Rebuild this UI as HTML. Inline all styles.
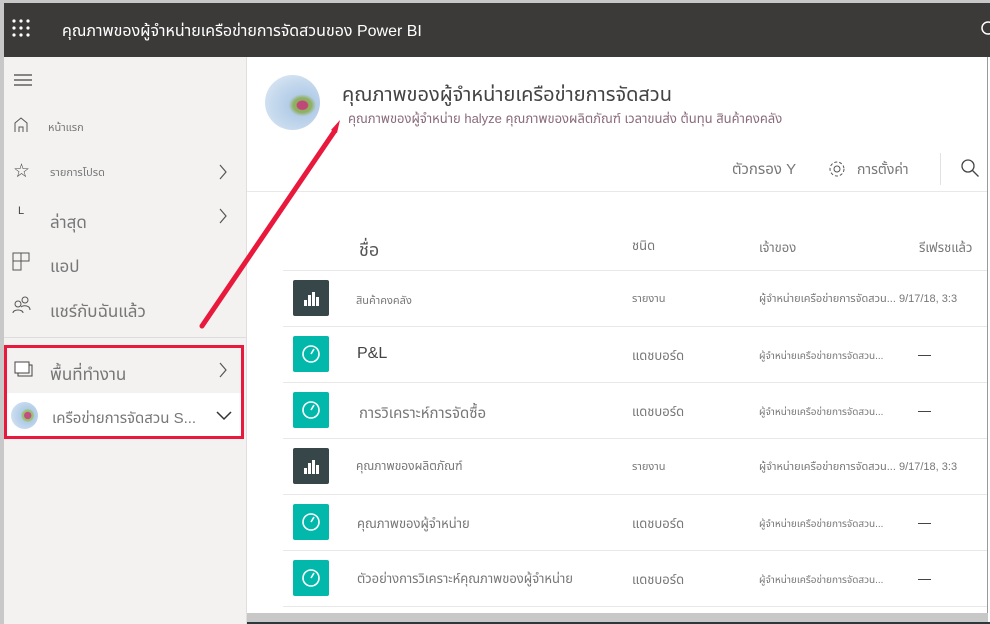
<!DOCTYPE html>
<html><head><meta charset="utf-8"><style>
*{margin:0;padding:0;box-sizing:border-box}
body{width:990px;height:624px;overflow:hidden;position:relative;background:#fff;font-family:"Liberation Sans","Noto Sans Thai","Garuda",sans-serif;color:#555}
.a{position:absolute}
.top{left:0;top:0;width:990px;height:57px;background:#3b3a39;border-top:3px solid #c8c8c8;border-left:4px solid #c8c8c8}
.side{left:0;top:57px;width:247px;height:567px;background:#f3f2f1;border-left:4px solid #c8c8c8;border-right:1px solid #e1dfdd}
.t{white-space:nowrap}
.line{height:1px;background:#e8e8e8}
.ic{width:36px;height:36px;border-radius:2px}
</style></head><body>
<div class="a top"></div>
<svg class="a" style="left:12px;top:19px" width="20" height="20"><g fill="#fff"><circle cx="2" cy="2" r="1.6"/><circle cx="9" cy="2" r="1.6"/><circle cx="16" cy="2" r="1.6"/><circle cx="2" cy="9" r="1.6"/><circle cx="9" cy="9" r="1.6"/><circle cx="16" cy="9" r="1.6"/><circle cx="2" cy="16" r="1.6"/><circle cx="9" cy="16" r="1.6"/><circle cx="16" cy="16" r="1.6"/></g></svg>
<div class="a t" style="left:62px;top:20px;color:#fff;font-size:16px">คุณภาพของผู้จำหน่ายเครือข่ายการจัดสวนของ Power BI</div>
<svg class="a" style="left:978px;top:20px" width="12" height="20"><circle cx="10" cy="8" r="6" fill="none" stroke="#fff" stroke-width="1.5"/></svg>
<div class="a" style="left:987px;top:57px;width:3px;height:567px;background:#fff;border-left:1px solid #999"></div>
<div class="a side"></div>
<svg class="a" style="left:14px;top:74px" width="20" height="14"><path d="M0 1h18M0 6h18M0 11h18" stroke="#444" stroke-width="1.2"/></svg>
<svg class="a" style="left:14px;top:117px" width="14" height="16"><path d="M1 15V6l6-5 6 5v9M5 15v-5h4v5" fill="none" stroke="#555"/></svg>
<div class="a t" style="left:48px;top:119px;font-size:11px;color:#777">หน้าแรก</div>
<div class="a t" style="left:13px;top:160px;font-size:19px;color:#444">☆</div>
<div class="a t" style="left:50px;top:164px;font-size:11px;color:#777">รายการโปรด</div>
<svg class="a" style="left:218px;top:164px" width="10" height="16"><path d="M2 1l6 7-6 7" fill="none" stroke="#555" stroke-width="1.2"/></svg>
<div class="a t" style="left:18px;top:205px;font-size:11px;color:#444">L</div>
<div class="a t" style="left:50px;top:210px;font-size:17px;color:#777">ล่าสุด</div>
<svg class="a" style="left:218px;top:208px" width="10" height="16"><path d="M2 1l6 7-6 7" fill="none" stroke="#555" stroke-width="1.2"/></svg>
<svg class="a" style="left:12px;top:252px" width="20" height="20"><path d="M1 1h16v8H9v9H1zM9 1v8M1 9h8" fill="none" stroke="#555"/></svg>
<div class="a t" style="left:50px;top:254px;font-size:17px;color:#777">แอป</div>
<svg class="a" style="left:12px;top:296px" width="20" height="18"><circle cx="6" cy="8" r="3" fill="none" stroke="#555"/><circle cx="13" cy="4" r="3" fill="none" stroke="#555"/><path d="M1 17c0-4 10-4 10 0M9 11c2-2 9-2 9 3" fill="none" stroke="#555"/></svg>
<div class="a t" style="left:50px;top:299px;font-size:17px;color:#777">แชร์กับฉันแล้ว</div>
<div class="a line" style="left:4px;top:337px;width:243px;background:#ddd"></div>
<div class="a" style="left:4px;top:393px;width:240px;height:46px;background:#fff"></div>
<svg class="a" style="left:12px;top:359px" width="22" height="20"><path d="M3 3h14v11H3z" fill="#fff" stroke="#444"/><path d="M6 14v3h14V6h-3" fill="none" stroke="#444"/></svg>
<div class="a t" style="left:50px;top:362px;font-size:17px;color:#777">พื้นที่ทำงาน</div>
<svg class="a" style="left:218px;top:362px" width="10" height="16"><path d="M2 1l6 7-6 7" fill="none" stroke="#555" stroke-width="1.2"/></svg>
<div class="a" style="left:11px;top:402px;width:27px;height:27px;border-radius:50%;background:radial-gradient(circle at 62% 50%,#c05080 0 16%,#9cc070 18% 24%,#b0cce8 32%,#dde8f4 100%)"></div>
<div class="a t" style="left:52px;top:407px;font-size:15px;color:#777">เครือข่ายการจัดสวน S...</div>
<svg class="a" style="left:216px;top:411px" width="16" height="10"><path d="M1 1l7 7 7-7" fill="none" stroke="#333" stroke-width="1.5"/></svg>
<div class="a" style="left:4px;top:345px;width:240px;height:94px;border:3px solid #e8193c"></div>

<div class="a" style="left:265px;top:75px;width:55px;height:55px;border-radius:50%;background:radial-gradient(ellipse at 68% 55%,#c04878 0 10%,#8fb060 12% 17%,#b4cde8 26%,#c8dbee 60%,#e6eef7 100%)"></div>
<div class="a t" style="left:342px;top:80px;font-size:20px;color:#444">คุณภาพของผู้จำหน่ายเครือข่ายการจัดสวน</div>
<div class="a t" style="left:348px;top:109px;font-size:13px;color:#8a6b7b">คุณภาพของผู้จำหน่าย halyze คุณภาพของผลิตภัณฑ์ เวลาขนส่ง ต้นทุน สินค้าคงคลัง</div>
<div class="a t" style="left:732px;top:158px;font-size:15px;color:#777">ตัวกรอง Y</div>
<svg class="a" style="left:828px;top:160px" width="18" height="18"><circle cx="9" cy="9" r="3" fill="none" stroke="#555"/><circle cx="9" cy="9" r="7" fill="none" stroke="#555" stroke-dasharray="3 2"/></svg>
<div class="a t" style="left:857px;top:160px;font-size:14px;color:#777">การตั้งค่า</div>
<div class="a" style="left:940px;top:153px;width:1px;height:32px;background:#e1e1e1"></div>
<svg class="a" style="left:960px;top:158px" width="20" height="20"><circle cx="8" cy="8" r="6" fill="none" stroke="#444" stroke-width="1.3"/><path d="M12.5 12.5l6 6" stroke="#444" stroke-width="1.3"/></svg>
<div class="a line" style="left:247px;top:191px;width:740px"></div>
<div class="a t" style="left:359px;top:238px;font-size:18px;color:#555">ชื่อ</div>
<div class="a t" style="left:632px;top:236px;font-size:13px;color:#777">ชนิด</div>
<div class="a t" style="left:759px;top:238px;font-size:13px;color:#777">เจ้าของ</div>
<div class="a t" style="left:919px;top:238px;font-size:13px;color:#777">รีเฟรชแล้ว</div>

<div class="a line" style="left:283px;top:270px;width:704px"></div>
<div class="a line" style="left:283px;top:326px;width:704px"></div>
<div class="a line" style="left:283px;top:382px;width:704px"></div>
<div class="a line" style="left:283px;top:438px;width:704px"></div>
<div class="a line" style="left:283px;top:494px;width:704px"></div>
<div class="a line" style="left:283px;top:550px;width:704px"></div>
<div class="a line" style="left:283px;top:606px;width:704px"></div>

<div class="a ic" style="left:293px;top:280px;background:#374649"></div>
<svg class="a" style="left:302px;top:289px" width="18" height="18"><path d="M2 11h3v6H2zM6 6h3v11H6zM10 3h3v14h-3zM14 8h3v9h-3z" fill="#fff"/></svg>
<div class="a t" style="left:356px;top:292px;font-size:11px;color:#777">สินค้าคงคลัง</div>
<div class="a t" style="left:632px;top:290px;font-size:11px;color:#777">รายงาน</div>
<div class="a t" style="left:759px;top:290px;font-size:11px;color:#777">ผู้จำหน่ายเครือข่ายการจัดสวน... 9/17/18, 3:3</div>

<div class="a ic" style="left:293px;top:336px;background:#01b8aa"></div>
<div class="a t" style="left:357px;top:345px;font-size:16px;color:#444">P&amp;L</div>
<div class="a t" style="left:632px;top:346px;font-size:13px;color:#777">แดชบอร์ด</div>
<div class="a t" style="left:759px;top:348px;font-size:10px;color:#777">ผู้จำหน่ายเครือข่ายการจัดสวน...</div>
<div class="a" style="left:918px;top:355px;width:13px;height:1px;background:#444"></div>

<div class="a ic" style="left:293px;top:392px;background:#01b8aa"></div>
<div class="a t" style="left:359px;top:402px;font-size:15px;color:#777">การวิเคราะห์การจัดซื้อ</div>
<div class="a t" style="left:632px;top:402px;font-size:13px;color:#777">แดชบอร์ด</div>
<div class="a t" style="left:759px;top:404px;font-size:10px;color:#777">ผู้จำหน่ายเครือข่ายการจัดสวน...</div>
<div class="a" style="left:918px;top:411px;width:13px;height:1px;background:#444"></div>

<div class="a ic" style="left:293px;top:448px;background:#374649"></div>
<svg class="a" style="left:302px;top:457px" width="18" height="18"><path d="M2 11h3v6H2zM6 6h3v11H6zM10 3h3v14h-3zM14 8h3v9h-3z" fill="#fff"/></svg>
<div class="a t" style="left:356px;top:458px;font-size:12px;color:#777">คุณภาพของผลิตภัณฑ์</div>
<div class="a t" style="left:632px;top:458px;font-size:11px;color:#777">รายงาน</div>
<div class="a t" style="left:759px;top:458px;font-size:11px;color:#777">ผู้จำหน่ายเครือข่ายการจัดสวน... 9/17/18, 3:3</div>

<div class="a ic" style="left:293px;top:504px;background:#01b8aa"></div>
<div class="a t" style="left:357px;top:514px;font-size:13px;color:#777">คุณภาพของผู้จำหน่าย</div>
<div class="a t" style="left:632px;top:514px;font-size:13px;color:#777">แดชบอร์ด</div>
<div class="a t" style="left:759px;top:516px;font-size:10px;color:#777">ผู้จำหน่ายเครือข่ายการจัดสวน...</div>
<div class="a" style="left:918px;top:523px;width:13px;height:1px;background:#444"></div>

<div class="a ic" style="left:293px;top:560px;background:#01b8aa"></div>
<div class="a t" style="left:357px;top:569px;font-size:13px;color:#777">ตัวอย่างการวิเคราะห์คุณภาพของผู้จำหน่าย</div>
<div class="a t" style="left:632px;top:570px;font-size:13px;color:#777">แดชบอร์ด</div>
<div class="a t" style="left:759px;top:572px;font-size:10px;color:#777">ผู้จำหน่ายเครือข่ายการจัดสวน...</div>
<div class="a" style="left:918px;top:579px;width:13px;height:1px;background:#444"></div>

<svg class="a" style="left:293px;top:336px" width="36" height="260">
<g fill="none" stroke="#fff" stroke-width="1.6">
<circle cx="18" cy="18" r="8"/><path d="M18 18l3-5"/>
<circle cx="18" cy="74" r="8"/><path d="M18 74l3-5"/>
<circle cx="18" cy="186" r="8"/><path d="M18 186l3-5"/>
<circle cx="18" cy="242" r="8"/><path d="M18 242l3-5"/>
</g></svg>

<div class="a" style="left:247px;top:613px;width:741px;height:9px;background:#c8c8c8"></div>
<div class="a" style="left:247px;top:622px;width:743px;height:2px;background:#2a3a3a"></div>
<svg class="a" style="left:0;top:0" width="990" height="624"><path d="M202 326L334 132" stroke="#e8193c" stroke-width="5" stroke-linecap="round"/><path d="M340 120l-9 10 6 3z" fill="#e8193c"/></svg>
</body></html>
